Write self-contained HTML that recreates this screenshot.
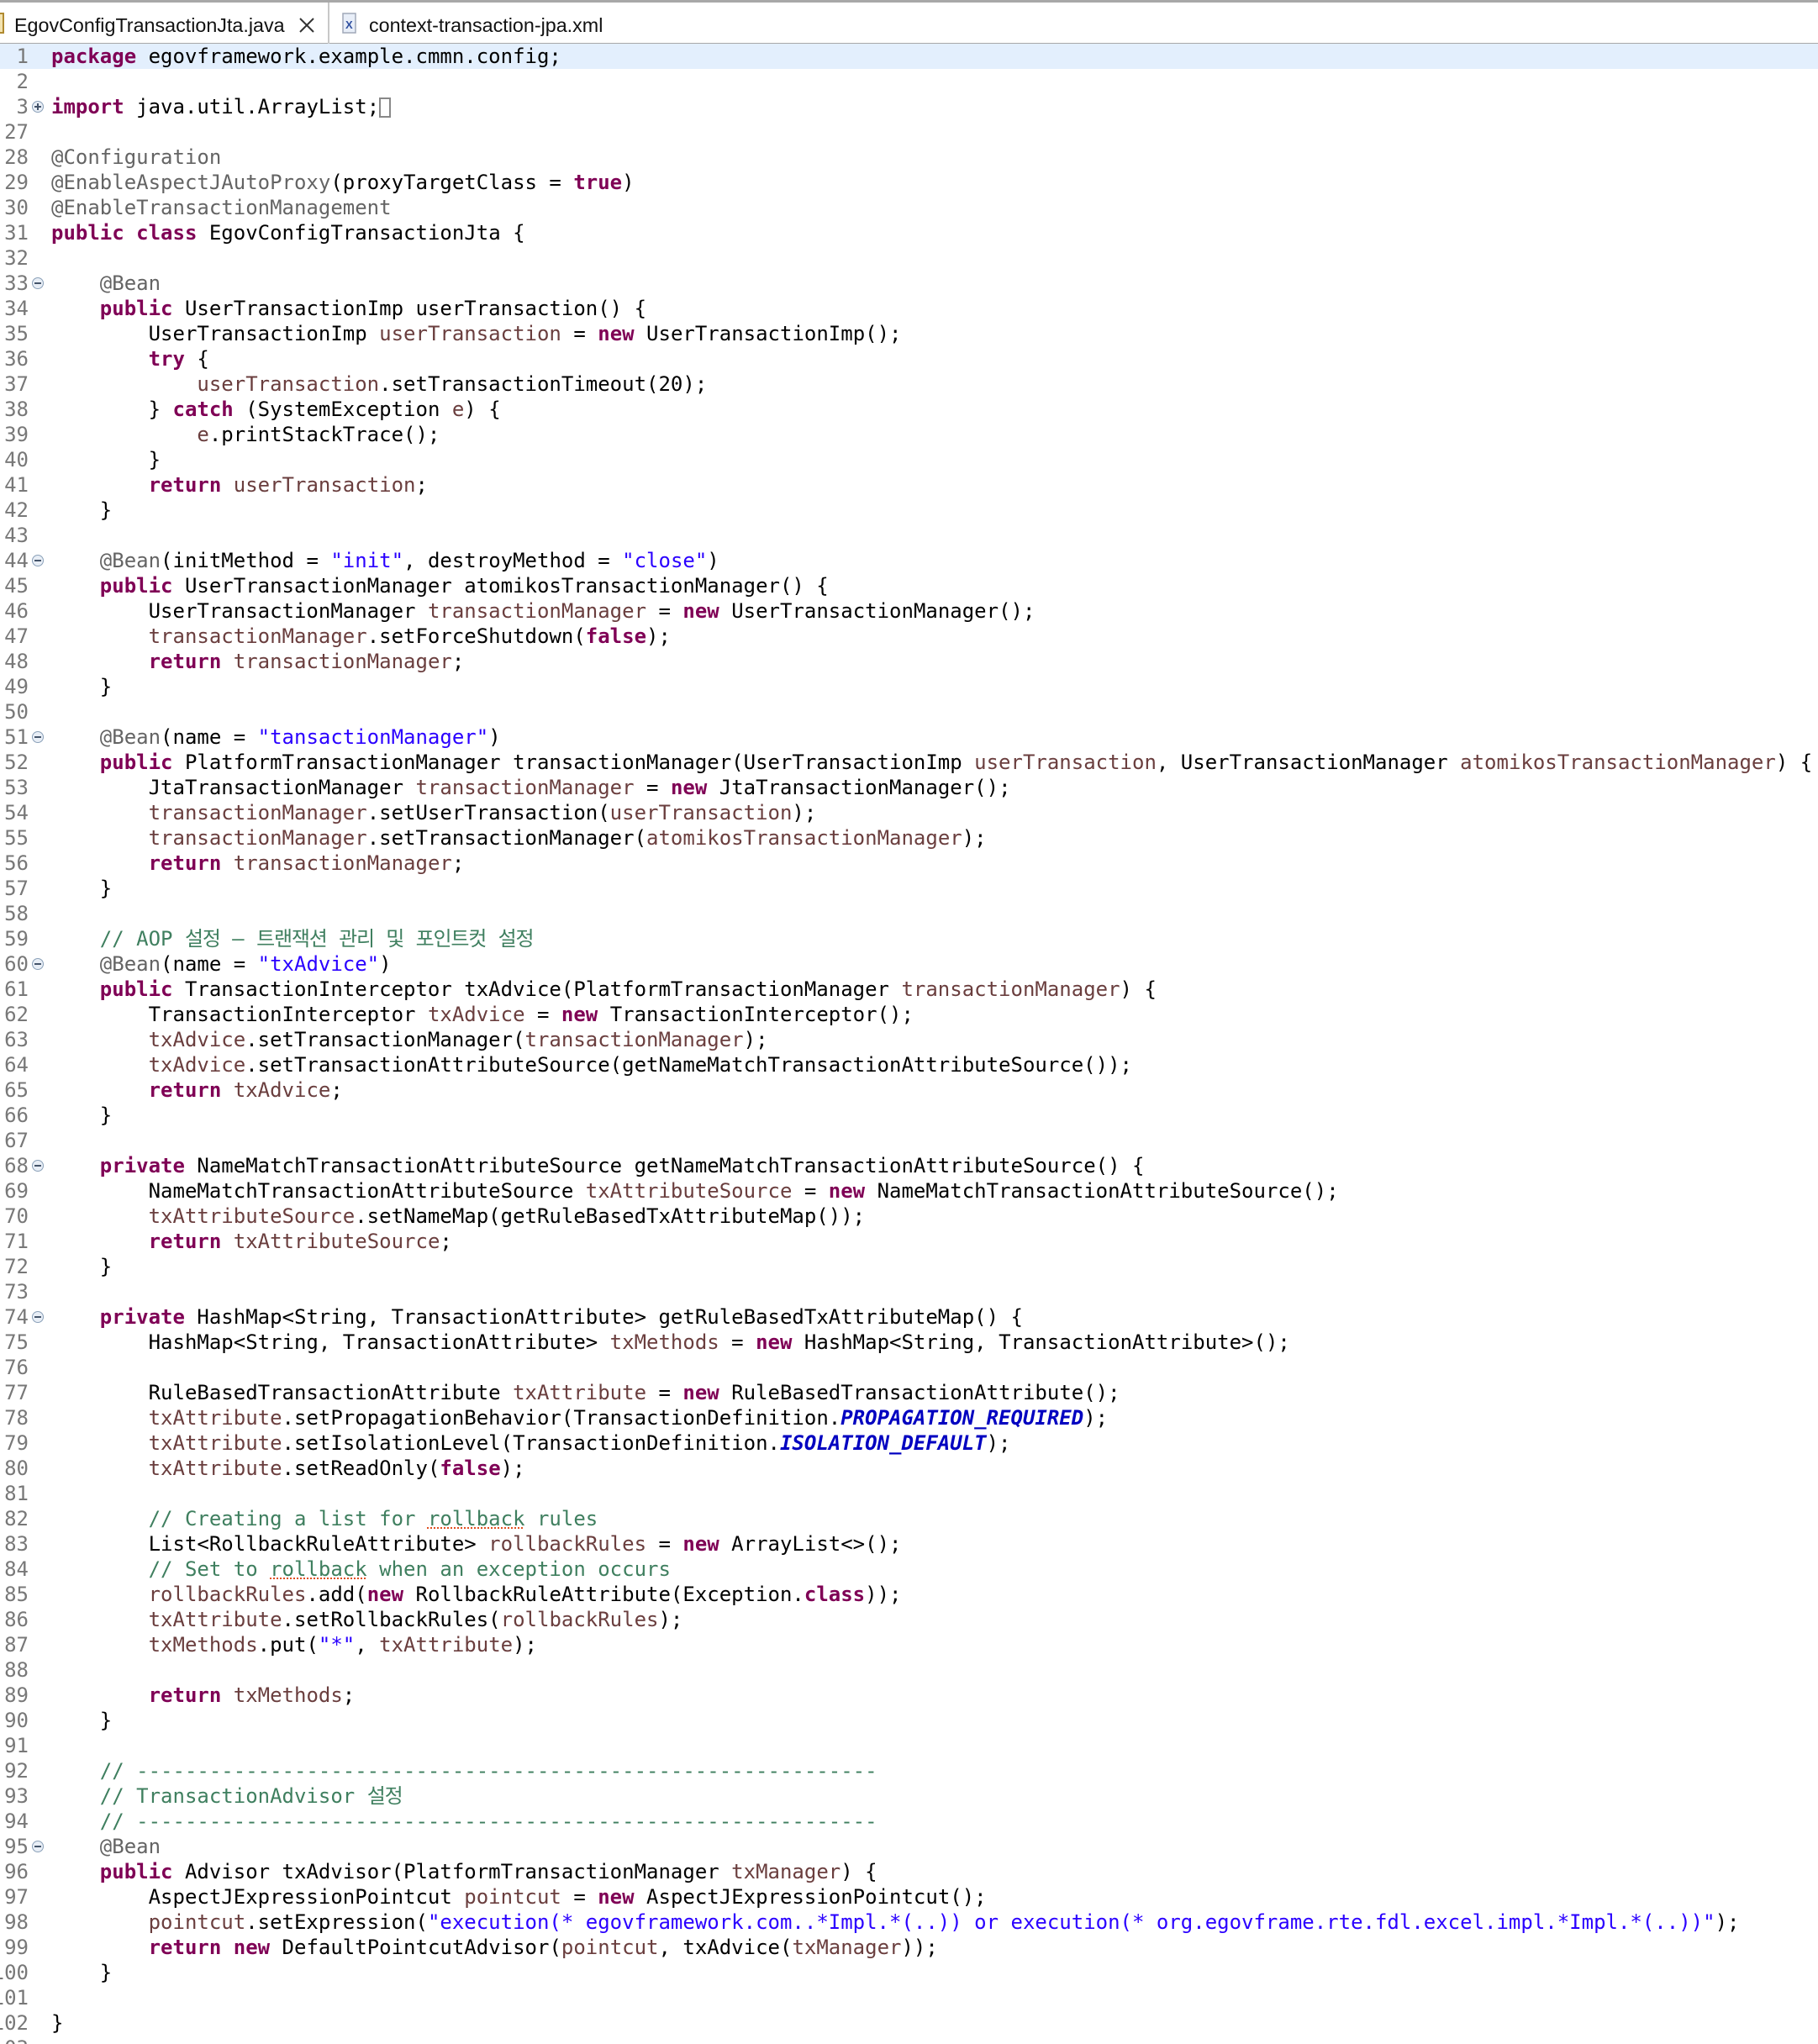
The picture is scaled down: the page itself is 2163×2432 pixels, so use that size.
<!DOCTYPE html>
<html><head><meta charset="utf-8"><style>
html,body{margin:0;padding:0;background:#fff;width:2163px;height:2432px;overflow:hidden;position:relative}
.tabs{position:absolute;left:0;top:0;width:2163px;height:54px;border-top:3px solid #a8a8a8;border-bottom:3px solid #a8a8a8;box-sizing:border-box;font-family:"Liberation Sans",sans-serif;font-size:23.3px;color:#111}
.t1{position:absolute;left:0;top:0;width:392px;height:51px;border-right:2px solid #c8c8c8;box-sizing:border-box}
.t1 .ul{position:absolute;left:0;bottom:-3px;width:392px;height:4px;background:#5b87d6}
.code{position:absolute;left:0;top:52px;width:2163px;font-family:"DejaVu Sans Mono","Liberation Mono","Noto Sans CJK KR",monospace;font-size:24px;line-height:30px;color:#000}
.l{height:30px;white-space:pre;position:relative;padding-left:61px}
.hl{background:#e3effd}
.n{position:absolute;right:2129px;color:#787878;top:0}
.f{position:absolute;left:38px;top:8px;width:12px;height:12px;border:1.5px solid #8aa0b8;border-radius:50%;background:#e8eef6;box-sizing:content-box}
.f::after{content:"";position:absolute;left:2px;top:5px;width:8px;height:2px;background:#44546a}
.fp::before{content:"";position:absolute;left:5px;top:2px;width:2px;height:8px;background:#44546a}
.k{color:#7f0055;font-weight:bold}
.s{color:#2a00ff}
.v{color:#6a3e3e}
.c{color:#3f7f5f}
.a{color:#646464}
.ko{letter-spacing:-1.2px}
.sf{color:#0000c0;font-weight:bold;font-style:italic}
.w{text-decoration:underline dotted #e05020 2px;text-underline-offset:2px}
.box{display:inline-block;width:14px;height:24px;border:2px solid #888;vertical-align:-5px;box-sizing:border-box}
</style></head><body>
<div class="tabs">
<div class="t1"><svg style="position:absolute;left:-6px;top:12px" width="12" height="26"><rect x="0" y="1" width="10" height="23" fill="#f3e3b0" stroke="#b08a30" stroke-width="2"/></svg><span style="position:absolute;left:17px;top:14px">EgovConfigTransactionJta.java</span><svg style="position:absolute;left:355px;top:17px" width="20" height="20"><path d="M2 2L18 18M18 2L2 18" stroke="#333" stroke-width="2"/></svg><div class="ul"></div></div>
<svg style="position:absolute;left:407px;top:12px" width="18" height="26"><rect x="1" y="1" width="15" height="23" fill="#e8eef8" stroke="#a0a8b8" stroke-width="1.5"/><text x="4" y="19" font-family="Liberation Sans" font-size="13" fill="#3050a0" font-weight="bold">X</text></svg>
<span style="position:absolute;left:439px;top:14px">context-transaction-jpa.xml</span>
</div>
<div class="code">
<div class="l hl"><span class="n">1</span><span class="k">package</span> egovframework.example.cmmn.config;</div>
<div class="l"><span class="n">2</span></div>
<div class="l"><span class="n">3</span><span class="f fp"></span><span class="k">import</span> java.util.ArrayList;<span class="box"></span></div>
<div class="l"><span class="n">27</span></div>
<div class="l"><span class="n">28</span><span class="a">@Configuration</span></div>
<div class="l"><span class="n">29</span><span class="a">@EnableAspectJAutoProxy</span>(proxyTargetClass = <span class="k">true</span>)</div>
<div class="l"><span class="n">30</span><span class="a">@EnableTransactionManagement</span></div>
<div class="l"><span class="n">31</span><span class="k">public</span> <span class="k">class</span> EgovConfigTransactionJta {</div>
<div class="l"><span class="n">32</span></div>
<div class="l"><span class="n">33</span><span class="f"></span>    <span class="a">@Bean</span></div>
<div class="l"><span class="n">34</span>    <span class="k">public</span> UserTransactionImp userTransaction() {</div>
<div class="l"><span class="n">35</span>        UserTransactionImp <span class="v">userTransaction</span> = <span class="k">new</span> UserTransactionImp();</div>
<div class="l"><span class="n">36</span>        <span class="k">try</span> {</div>
<div class="l"><span class="n">37</span>            <span class="v">userTransaction</span>.setTransactionTimeout(20);</div>
<div class="l"><span class="n">38</span>        } <span class="k">catch</span> (SystemException <span class="v">e</span>) {</div>
<div class="l"><span class="n">39</span>            <span class="v">e</span>.printStackTrace();</div>
<div class="l"><span class="n">40</span>        }</div>
<div class="l"><span class="n">41</span>        <span class="k">return</span> <span class="v">userTransaction</span>;</div>
<div class="l"><span class="n">42</span>    }</div>
<div class="l"><span class="n">43</span></div>
<div class="l"><span class="n">44</span><span class="f"></span>    <span class="a">@Bean</span>(initMethod = <span class="s">"init"</span>, destroyMethod = <span class="s">"close"</span>)</div>
<div class="l"><span class="n">45</span>    <span class="k">public</span> UserTransactionManager atomikosTransactionManager() {</div>
<div class="l"><span class="n">46</span>        UserTransactionManager <span class="v">transactionManager</span> = <span class="k">new</span> UserTransactionManager();</div>
<div class="l"><span class="n">47</span>        <span class="v">transactionManager</span>.setForceShutdown(<span class="k">false</span>);</div>
<div class="l"><span class="n">48</span>        <span class="k">return</span> <span class="v">transactionManager</span>;</div>
<div class="l"><span class="n">49</span>    }</div>
<div class="l"><span class="n">50</span></div>
<div class="l"><span class="n">51</span><span class="f"></span>    <span class="a">@Bean</span>(name = <span class="s">"tansactionManager"</span>)</div>
<div class="l"><span class="n">52</span>    <span class="k">public</span> PlatformTransactionManager transactionManager(UserTransactionImp <span class="v">userTransaction</span>, UserTransactionManager <span class="v">atomikosTransactionManager</span>) {</div>
<div class="l"><span class="n">53</span>        JtaTransactionManager <span class="v">transactionManager</span> = <span class="k">new</span> JtaTransactionManager();</div>
<div class="l"><span class="n">54</span>        <span class="v">transactionManager</span>.setUserTransaction(<span class="v">userTransaction</span>);</div>
<div class="l"><span class="n">55</span>        <span class="v">transactionManager</span>.setTransactionManager(<span class="v">atomikosTransactionManager</span>);</div>
<div class="l"><span class="n">56</span>        <span class="k">return</span> <span class="v">transactionManager</span>;</div>
<div class="l"><span class="n">57</span>    }</div>
<div class="l"><span class="n">58</span></div>
<div class="l"><span class="n">59</span>    <span class="c">// AOP <span class="ko">설정</span> – <span class="ko">트랜잭션</span> <span class="ko">관리</span> <span class="ko">및</span> <span class="ko">포인트컷</span> <span class="ko">설정</span></span></div>
<div class="l"><span class="n">60</span><span class="f"></span>    <span class="a">@Bean</span>(name = <span class="s">"txAdvice"</span>)</div>
<div class="l"><span class="n">61</span>    <span class="k">public</span> TransactionInterceptor txAdvice(PlatformTransactionManager <span class="v">transactionManager</span>) {</div>
<div class="l"><span class="n">62</span>        TransactionInterceptor <span class="v">txAdvice</span> = <span class="k">new</span> TransactionInterceptor();</div>
<div class="l"><span class="n">63</span>        <span class="v">txAdvice</span>.setTransactionManager(<span class="v">transactionManager</span>);</div>
<div class="l"><span class="n">64</span>        <span class="v">txAdvice</span>.setTransactionAttributeSource(getNameMatchTransactionAttributeSource());</div>
<div class="l"><span class="n">65</span>        <span class="k">return</span> <span class="v">txAdvice</span>;</div>
<div class="l"><span class="n">66</span>    }</div>
<div class="l"><span class="n">67</span></div>
<div class="l"><span class="n">68</span><span class="f"></span>    <span class="k">private</span> NameMatchTransactionAttributeSource getNameMatchTransactionAttributeSource() {</div>
<div class="l"><span class="n">69</span>        NameMatchTransactionAttributeSource <span class="v">txAttributeSource</span> = <span class="k">new</span> NameMatchTransactionAttributeSource();</div>
<div class="l"><span class="n">70</span>        <span class="v">txAttributeSource</span>.setNameMap(getRuleBasedTxAttributeMap());</div>
<div class="l"><span class="n">71</span>        <span class="k">return</span> <span class="v">txAttributeSource</span>;</div>
<div class="l"><span class="n">72</span>    }</div>
<div class="l"><span class="n">73</span></div>
<div class="l"><span class="n">74</span><span class="f"></span>    <span class="k">private</span> HashMap&lt;String, TransactionAttribute&gt; getRuleBasedTxAttributeMap() {</div>
<div class="l"><span class="n">75</span>        HashMap&lt;String, TransactionAttribute&gt; <span class="v">txMethods</span> = <span class="k">new</span> HashMap&lt;String, TransactionAttribute&gt;();</div>
<div class="l"><span class="n">76</span></div>
<div class="l"><span class="n">77</span>        RuleBasedTransactionAttribute <span class="v">txAttribute</span> = <span class="k">new</span> RuleBasedTransactionAttribute();</div>
<div class="l"><span class="n">78</span>        <span class="v">txAttribute</span>.setPropagationBehavior(TransactionDefinition.<span class="sf">PROPAGATION_REQUIRED</span>);</div>
<div class="l"><span class="n">79</span>        <span class="v">txAttribute</span>.setIsolationLevel(TransactionDefinition.<span class="sf">ISOLATION_DEFAULT</span>);</div>
<div class="l"><span class="n">80</span>        <span class="v">txAttribute</span>.setReadOnly(<span class="k">false</span>);</div>
<div class="l"><span class="n">81</span></div>
<div class="l"><span class="n">82</span>        <span class="c">// Creating a list for <span class="w">rollback</span> rules</span></div>
<div class="l"><span class="n">83</span>        List&lt;RollbackRuleAttribute&gt; <span class="v">rollbackRules</span> = <span class="k">new</span> ArrayList&lt;&gt;();</div>
<div class="l"><span class="n">84</span>        <span class="c">// Set to <span class="w">rollback</span> when an exception occurs</span></div>
<div class="l"><span class="n">85</span>        <span class="v">rollbackRules</span>.add(<span class="k">new</span> RollbackRuleAttribute(Exception.<span class="k">class</span>));</div>
<div class="l"><span class="n">86</span>        <span class="v">txAttribute</span>.setRollbackRules(<span class="v">rollbackRules</span>);</div>
<div class="l"><span class="n">87</span>        <span class="v">txMethods</span>.put(<span class="s">"*"</span>, <span class="v">txAttribute</span>);</div>
<div class="l"><span class="n">88</span></div>
<div class="l"><span class="n">89</span>        <span class="k">return</span> <span class="v">txMethods</span>;</div>
<div class="l"><span class="n">90</span>    }</div>
<div class="l"><span class="n">91</span></div>
<div class="l"><span class="n">92</span>    <span class="c">// -------------------------------------------------------------</span></div>
<div class="l"><span class="n">93</span>    <span class="c">// TransactionAdvisor <span class="ko">설정</span></span></div>
<div class="l"><span class="n">94</span>    <span class="c">// -------------------------------------------------------------</span></div>
<div class="l"><span class="n">95</span><span class="f"></span>    <span class="a">@Bean</span></div>
<div class="l"><span class="n">96</span>    <span class="k">public</span> Advisor txAdvisor(PlatformTransactionManager <span class="v">txManager</span>) {</div>
<div class="l"><span class="n">97</span>        AspectJExpressionPointcut <span class="v">pointcut</span> = <span class="k">new</span> AspectJExpressionPointcut();</div>
<div class="l"><span class="n">98</span>        <span class="v">pointcut</span>.setExpression(<span class="s">"execution(* egovframework.com..*Impl.*(..)) or execution(* org.egovframe.rte.fdl.excel.impl.*Impl.*(..))"</span>);</div>
<div class="l"><span class="n">99</span>        <span class="k">return</span> <span class="k">new</span> DefaultPointcutAdvisor(<span class="v">pointcut</span>, txAdvice(<span class="v">txManager</span>));</div>
<div class="l"><span class="n">100</span>    }</div>
<div class="l"><span class="n">101</span></div>
<div class="l"><span class="n">102</span>}</div>
<div class="l"><span class="n">103</span></div>
</div>
</body></html>
